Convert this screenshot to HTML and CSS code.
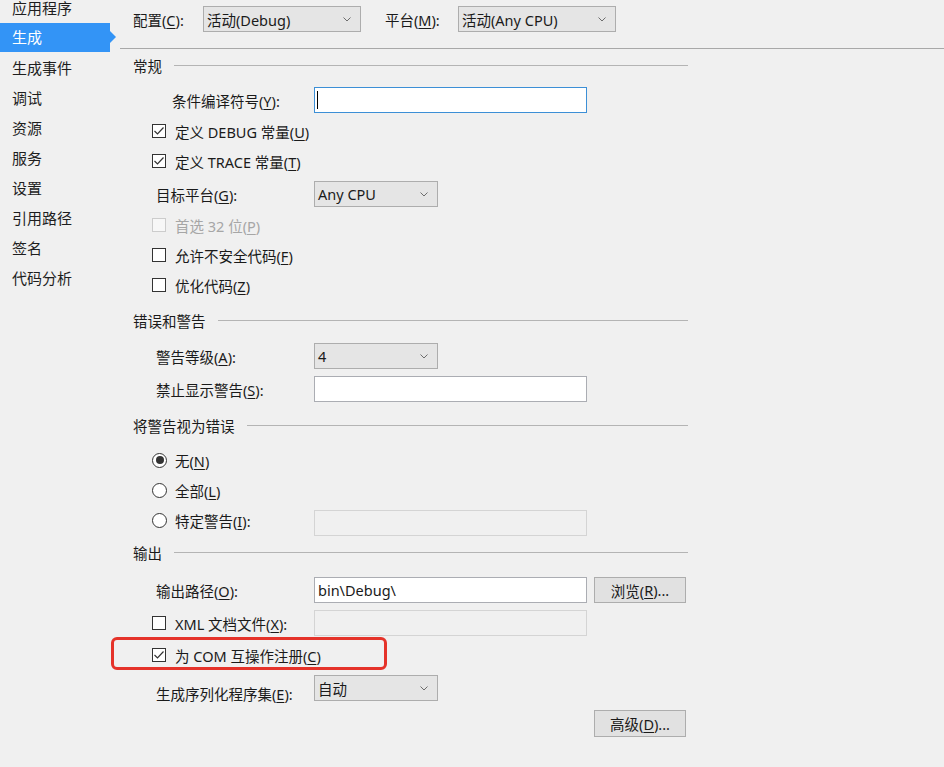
FILE: index.html
```html
<!DOCTYPE html>
<html lang="zh-CN">
<head>
<meta charset="utf-8">
<title>生成</title>
<link rel="stylesheet" href="styles.css">
</head>
<body>
<div class="app">
  <nav class="sidebar">
    <div class="nav-item">应用程序</div>
    <div class="nav-item active">生成</div>
    <div class="nav-item">生成事件</div>
    <div class="nav-item">调试</div>
    <div class="nav-item">资源</div>
    <div class="nav-item">服务</div>
    <div class="nav-item">设置</div>
    <div class="nav-item">引用路径</div>
    <div class="nav-item">签名</div>
    <div class="nav-item">代码分析</div>
  </nav>

  <main class="content">
    <div class="topbar">
      <span class="top-label">配置(<u>C</u>):</span>
      <div class="select select-wide"><span>活动(Debug)</span><svg class="chev" width="8" height="5" viewBox="0 0 8 5"><polyline points="0.5,0.5 4,4 7.5,0.5" fill="none" stroke="#6d6d6d" stroke-width="1"/></svg></div>
      <span class="top-label top-label-2">平台(<u>M</u>):</span>
      <div class="select select-wide"><span>活动(Any CPU)</span><svg class="chev" width="8" height="5" viewBox="0 0 8 5"><polyline points="0.5,0.5 4,4 7.5,0.5" fill="none" stroke="#6d6d6d" stroke-width="1"/></svg></div>
    </div>
    <div class="rule-full"></div>

    <div class="groups">
      <div class="group-head"><span>常规</span><div class="line"></div></div>

      <div class="row row-ctrl row-first">
        <span class="label label-deep">条件编译符号(<u>Y</u>):</span>
        <div class="input input-focus"><span class="caret"></span></div>
      </div>
      <div class="row row-check gap3">
        <span class="box"><svg width="14" height="14" viewBox="0 0 14 14"><polyline points="2.5,7 5.5,10 11.5,3.5" fill="none" stroke="#333" stroke-width="1.2"/></svg></span>
        <span class="text">定义 DEBUG 常量(<u>U</u>)</span>
      </div>
      <div class="row row-check">
        <span class="box"><svg width="14" height="14" viewBox="0 0 14 14"><polyline points="2.5,7 5.5,10 11.5,3.5" fill="none" stroke="#333" stroke-width="1.2"/></svg></span>
        <span class="text">定义 TRACE 常量(<u>T</u>)</span>
      </div>
      <div class="row row-ctrl row-after-check">
        <span class="label">目标平台(<u>G</u>):</span>
        <div class="select select-short"><span>Any CPU</span><svg class="chev" width="8" height="5" viewBox="0 0 8 5"><polyline points="0.5,0.5 4,4 7.5,0.5" fill="none" stroke="#6d6d6d" stroke-width="1"/></svg></div>
      </div>
      <div class="row row-check disabled gap3">
        <span class="box"></span>
        <span class="text">首选 32 位(<u>P</u>)</span>
      </div>
      <div class="row row-check">
        <span class="box"></span>
        <span class="text">允许不安全代码(<u>F</u>)</span>
      </div>
      <div class="row row-check">
        <span class="box"></span>
        <span class="text">优化代码(<u>Z</u>)</span>
      </div>

      <div class="group-head gh-2"><span>错误和警告</span><div class="line"></div></div>
      <div class="row row-ctrl row-gap7">
        <span class="label">警告等级(<u>A</u>):</span>
        <div class="select select-short"><span>4</span><svg class="chev" width="8" height="5" viewBox="0 0 8 5"><polyline points="0.5,0.5 4,4 7.5,0.5" fill="none" stroke="#6d6d6d" stroke-width="1"/></svg></div>
      </div>
      <div class="row row-ctrl row-gap7">
        <span class="label">禁止显示警告(<u>S</u>):</span>
        <div class="input"></div>
      </div>

      <div class="group-head gh-3"><span>将警告视为错误</span><div class="line"></div></div>
      <div class="row row-radio rr-first">
        <span class="radio checked"><span class="dot"></span></span>
        <span class="text">无(<u>N</u>)</span>
      </div>
      <div class="row row-radio">
        <span class="radio"></span>
        <span class="text">全部(<u>L</u>)</span>
      </div>
      <div class="row row-radio">
        <span class="radio"></span>
        <span class="text text-fixed">特定警告(<u>I</u>):</span>
        <div class="input input-disabled input-low"></div>
      </div>

      <div class="group-head gh-4"><span>输出</span><div class="line"></div></div>
      <div class="row row-ctrl row-gap9">
        <span class="label">输出路径(<u>O</u>):</span>
        <div class="input"><span class="value">bin\Debug\</span></div>
        <div class="button btn-browse">浏览(<u>R</u>)...</div>
      </div>
      <div class="row row-ctrl row-gap7 row-xml">
        <span class="box"></span>
        <span class="text text-fixed-xml">XML 文档文件(<u>X</u>):</span>
        <div class="input input-disabled"></div>
      </div>
      <div class="row row-check row-com">
        <span class="box"><svg width="14" height="14" viewBox="0 0 14 14"><polyline points="2.5,7 5.5,10 11.5,3.5" fill="none" stroke="#333" stroke-width="1.2"/></svg></span>
        <span class="text">为 COM 互操作注册(<u>C</u>)</span>
      </div>
      <div class="row row-ctrl row-serial">
        <span class="label label-low">生成序列化程序集(<u>E</u>):</span>
        <div class="select select-short"><span>自动</span><svg class="chev" width="8" height="5" viewBox="0 0 8 5"><polyline points="0.5,0.5 4,4 7.5,0.5" fill="none" stroke="#6d6d6d" stroke-width="1"/></svg></div>
      </div>
      <div class="row row-adv">
        <div class="button btn-adv">高级(<u>D</u>)...</div>
      </div>
    </div>
  </main>

  <div class="highlight"></div>
</div>
</body>
</html>
```

FILE: styles.css
```css
html, body {
  margin: 0;
  padding: 0;
  background: #f0f0f0;
}

body {
  font-family: "Segoe UI", "Noto Sans", "Noto Sans CJK SC", sans-serif;
  font-size: 14.5px;
  color: #1a1a1a;
  width: 944px;
  height: 767px;
  overflow: hidden;
}

u {
  text-decoration-thickness: 1px;
  text-underline-offset: 2px;
}

.app {
  position: relative;
  display: flex;
  width: 944px;
  height: 767px;
}

/* Sidebar */
.sidebar {
  width: 120px;
  flex: none;
  margin-top: -7px;
  display: flex;
  flex-direction: column;
}

.nav-item {
  position: relative;
  height: 30px;
  line-height: 30px;
  padding-left: 12px;
  width: 98px;
  font-size: 15px;
  color: #1e1e1e;
}

.nav-item.active {
  background: #3394f6;
  color: #ffffff;
  height: 29px;
  line-height: 29px;
  margin-bottom: 1px;
}

.nav-item.active::after {
  content: "";
  position: absolute;
  right: -6px;
  top: 8px;
  border-left: 6px solid #3394f6;
  border-top: 6px solid transparent;
  border-bottom: 6px solid transparent;
}

/* Content */
.content {
  flex: 1;
  display: flex;
  flex-direction: column;
}

.topbar {
  display: flex;
  align-items: center;
  height: 26px;
  margin-top: 6px;
  padding-left: 13px;
}

.top-label {
  width: 70px;
  white-space: nowrap;
}

.top-label-2 {
  margin-left: 24px;
  width: 73px;
}

.rule-full {
  height: 1px;
  background: #a8a8a8;
  margin-top: 16px;
}

.groups {
  width: 555px;
  padding-left: 13px;
  display: flex;
  flex-direction: column;
}

.group-head {
  display: flex;
  align-items: center;
  height: 32px;
  gap: 12px;
}

.group-head .line {
  flex: 1;
  height: 1px;
  background: #b4b4b4;
}

.gh-2 { margin-top: 4px; }
.gh-3 { margin-top: 7px; }
.gh-4 { margin-top: 1px; }

.row {
  display: flex;
  align-items: center;
}

.row-ctrl {
  height: 26px;
  padding-left: 23px;
}

.row-first { margin-top: 6px; }
.row-after-check { margin-top: 5px; }
.row-gap7 { margin-top: 7px; }
.row-gap9 { margin-top: 9px; }
.gap3 { margin-top: 3px; }

.label {
  width: 158px;
  flex: none;
  white-space: nowrap;
}

.label-deep {
  padding-left: 16px;
  width: 142px;
}

.label-low {
  position: relative;
  top: 5px;
}

.row-check, .row-radio {
  height: 30px;
  padding-left: 19px;
}

.box {
  width: 14px;
  height: 14px;
  box-sizing: border-box;
  border: 1px solid #333333;
  background: #ffffff;
  flex: none;
  margin-right: 9px;
  display: flex;
}

.box svg {
  margin: -1px;
}

.disabled .box {
  border-color: #cccccc;
  background: #f7f7f7;
}

.disabled .text {
  color: #a6a6a6;
}

.text {
  white-space: nowrap;
}

.radio {
  width: 15px;
  height: 15px;
  box-sizing: border-box;
  border: 1px solid #333333;
  border-radius: 50%;
  background: #ffffff;
  margin-right: 8px;
  flex: none;
  display: flex;
  align-items: center;
  justify-content: center;
}

.radio .dot {
  width: 8px;
  height: 8px;
  border-radius: 50%;
  background: #333333;
}

.rr-first { margin-top: 4px; }

.text-fixed {
  width: 139px;
  flex: none;
}

.input-low {
  position: relative;
  top: 3px;
}

.row-xml {
  padding-left: 19px;
}

.text-fixed-xml {
  width: 139px;
  flex: none;
}

.row-com {
  margin-top: 4px;
}

.row-serial {
  margin-top: 5px;
}

.row-adv {
  margin-top: 9px;
  padding-left: 461px;
}

/* Controls */
.select {
  position: relative;
  height: 26px;
  box-sizing: border-box;
  border: 1px solid #adadad;
  background: #e5e5e5;
  display: flex;
  align-items: center;
  padding-left: 3px;
  flex: none;
  white-space: nowrap;
}

.select-wide { width: 158px; }
.select-short { width: 124px; }

.select .chev {
  position: absolute;
  right: 9px;
  top: 10px;
}

.input {
  width: 273px;
  height: 26px;
  box-sizing: border-box;
  border: 1px solid #abadb3;
  background: #ffffff;
  flex: none;
  display: flex;
  align-items: center;
}

.input-focus {
  border-color: #3c8fd6;
}

.caret {
  width: 1px;
  height: 18px;
  background: #000000;
  margin-left: 2px;
}

.input .value {
  padding-left: 3px;
}

.input-disabled {
  background: #f0f0f0;
  border-color: #d4d4d4;
}

.button {
  width: 92px;
  height: 27px;
  box-sizing: border-box;
  border: 1px solid #adadad;
  background: #e1e1e1;
  display: flex;
  align-items: center;
  justify-content: center;
  flex: none;
  white-space: nowrap;
}

.btn-browse {
  margin-left: 7px;
  height: 26px;
}

/* Annotation overlay */
.highlight {
  position: absolute;
  left: 111px;
  top: 637px;
  width: 276px;
  height: 33px;
  box-sizing: border-box;
  border: 3px solid #e5332a;
  border-radius: 6px;
}
```
